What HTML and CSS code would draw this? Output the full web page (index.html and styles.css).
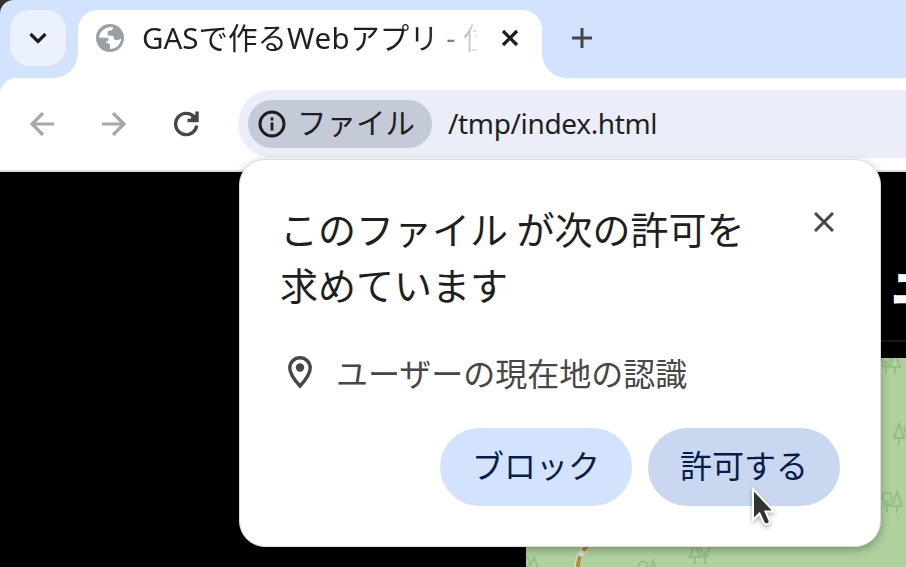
FILE: index.html
```html
<!DOCTYPE html>
<html lang="ja">
<head>
<meta charset="utf-8">
<title>GASで作るWebアプリ</title>
<link rel="stylesheet" href="styles.css">
</head>
<body>
<div class="window">
  <header class="tabstrip">
    <button class="tab-search" aria-label="タブを検索"><svg width="56" height="56" viewBox="0 0 56 56"><path d="M20.500 24l7.500 7.500 7.500-7.500" fill="none" stroke="#1f1f1f" stroke-width="3.200"/></svg></button>
    <div class="tab">
      <svg class="globe" width="28" height="28" viewBox="0 0 28 28"><circle cx="14" cy="14" r="14" fill="#9aa0a6"/><path d="M17 3C9.500 2.500 3.700 7 3 13.500c3 .2 5.500.3 8 .3 1 0 1.700.9 1.500 2-.1.800-1 1.300-2 1.300v1.700c0 1 1.500 1 3.500 1.100v5.200c6 0 11-4.600 11.200-11-1 1.700-3 2-5 2-1.600 0-2.300-1-2.300-2.700-1-2.300-2-1.400-4.500-1.600-1.600-.2-2-1-1.900-2.500.1-2 1-2.700 3-2.700 1.500 0 2.500-1.300 2.500-3.600z" fill="#fff"/></svg>
      <span class="tab-title">GASで作る<span class="latin">Web</span>アプリ - 位置情報</span>
      <svg class="tab-close" width="20" height="20" viewBox="0 0 20 20"><path d="M3 3l14 14M17 3L3 17" stroke="#1f1f1f" stroke-width="3.200"/></svg>
    </div>
    <svg class="new-tab" width="20" height="20" viewBox="0 0 20 20"><path d="M10 0v20M0 10h20" stroke="#474747" stroke-width="3"/></svg>
  </header>
  <nav class="toolbar">
    <svg width="24" height="24" viewBox="0 0 24 24"><path d="M13 1L2 12l11 11M2 12h22" fill="none" stroke="#a8a8a8" stroke-width="3.200"/></svg>
    <svg width="24" height="24" viewBox="0 0 24 24"><path d="M11 1l11 11-11 11M22 12H0" fill="none" stroke="#a8a8a8" stroke-width="3.200"/></svg>
    <svg class="reload" width="26" height="26" viewBox="0 0 26 26"><path d="M23.700 14.500a10.600 10.600 0 1 1-2.500-8.500M24 .5v9H14.500M18 8h4.500V4" fill="none" stroke="#474747" stroke-width="3.400"/></svg>
    <div class="omnibox">
      <div class="chip">
        <svg width="28" height="28" viewBox="0 0 28 28"><circle cx="14" cy="14" r="12" fill="none" stroke="#1f1f1f" stroke-width="3"/><path d="M14 12.500v8M14 7.500v3" stroke="#1f1f1f" stroke-width="2.800"/></svg>
        <span>ファイル</span>
      </div>
      <span class="url">/tmp/index.html</span>
    </div>
  </nav>
  <main class="page">
    <div class="page-head"><h1>ユ</h1></div>
    <svg class="map" width="380" height="209" viewBox="526 358 380 209">
      <defs>
        <g id="fir"><path d="M0 0l-5 14H5zM0 14v7"/></g>
        <g id="oak"><circle cy="5" r="4.500"/><path d="M0 9v12M-4 11l4 4 4-4"/></g>
      </defs>
      <path fill="#aed19e" d="M526 358h380v209H526z"/>
      <path d="M577 570Q577 549 597 540" fill="none" stroke="#d5dfc8" stroke-width="6"/>
      <path d="M578 570Q577 549 597 540" fill="none" stroke="#b58a3c" stroke-width="4" stroke-dasharray="14 6"/>
      <g fill="none" stroke="#97bd88" stroke-width="2">
        <use href="#oak" x="886" y="353"/><use href="#fir" x="895" y="353"/>
        <use href="#fir" x="899" y="424"/><use href="#oak" x="909" y="424"/>
        <use href="#oak" x="887" y="492"/><use href="#fir" x="897" y="492"/>
        <use href="#fir" x="695" y="543"/><use href="#oak" x="705" y="543"/>
        <use href="#oak" x="643" y="561"/><use href="#fir" x="653" y="561"/>
        <use href="#oak" x="525" y="557"/><use href="#fir" x="534" y="557"/>
      </g>
    </svg>
  </main>
</div>
<section class="prompt" role="dialog">
  <div class="prompt-head">
    <h2>このファイル が次の許可を<br>求めています</h2>
    <svg width="20" height="20" viewBox="0 0 20 20"><path d="M1 1l18 18M19 1L1 19" stroke="#474747" stroke-width="3"/></svg>
  </div>
  <div class="permission">
    <svg width="24" height="33" viewBox="0 0 24 33"><path d="M12 30C5 22.500 1.800 17 1.800 12a10.200 10.200 0 0 1 20.400 0c0 5-3.200 10.500-10.200 18z" fill="none" stroke="#474747" stroke-width="3.400"/><circle cx="12" cy="11.500" r="4.200" fill="#474747"/></svg>
    <span>ユーザーの現在地の認識</span>
  </div>
  <div class="actions">
    <button>ブロック</button>
    <button class="hover">許可する</button>
  </div>
</section>
<svg class="cursor" width="28" height="42" viewBox="0 0 28 42"><path d="M2 4v31l6.500-6.500 4.300 9.300q2 2.200 4.200 1.200 2.300-1.200 1.500-3.500L14.500 26.500H23z" fill="#333" stroke="#fff" stroke-width="2"/></svg>
</body>
</html>
```

FILE: styles.css
```css
* { box-sizing: border-box; }
body { margin: 0; overflow: hidden; background: #35322f; color: #1f1f1f; font-family: "Noto Sans", "Noto Sans CJK JP", sans-serif; }
svg { display: block; flex: none; }
button { border: 0; padding: 0; font: inherit; color: inherit; }
.window { width: 906px; height: 567px; display: flex; flex-direction: column; background: #d3e3fd; border-top-left-radius: 14px; overflow: hidden; }
.tabstrip { height: 78px; display: flex; padding: 10px 0 0 10px; flex: none; }
.tab-search { width: 56px; height: 56px; border-radius: 20px; background: #ebf1fe; }
.tab { position: relative; width: 464px; height: 68px; margin-left: 12px; padding: 0 22px 12px 18px; display: flex; align-items: center; background: #fff; border-radius: 20px 20px 0 0; }
.tab::before, .tab::after { content: ""; position: absolute; bottom: 0; width: 24px; height: 24px; }
.tab::before { right: 100%; background: radial-gradient(circle at 0 0, transparent 23.5px, #fff 24px); }
.tab::after { left: 100%; background: radial-gradient(circle at 100% 0, transparent 23.5px, #fff 24px); }
.tab-title { width: 335px; margin-left: 18px; font-size: 29.500px; line-height: 40px; white-space: nowrap; overflow: hidden; -webkit-mask-image: linear-gradient(90deg, #000 285px, transparent 340px); mask-image: linear-gradient(90deg, #000 285px, transparent 340px); }
.latin { letter-spacing: .5px; }
.tab-close { margin-left: auto; }
.new-tab { margin: 18px 0 0 30px; }
.toolbar { height: 94px; flex: none; display: flex; align-items: center; padding: 0 0 0 30px; background: #fff; border-bottom: 2px solid #dedede; border-top-left-radius: 16px; gap: 48px; }
.reload { margin: 0 1px 0 -1px; }
.omnibox { flex: 1; height: 68px; margin-left: -10px; padding-left: 10px; display: flex; align-items: center; background: #ebeef8; border-radius: 34px 0 0 34px; }
.chip { width: 184px; height: 48px; padding-left: 10px; display: flex; align-items: center; gap: 11px; background: #c4cad7; border-radius: 24px; font-size: 29.500px; line-height: 48px; }
.chip span { padding-bottom: 2px; }
.url { margin-left: 16px; padding-bottom: 2px; font-size: 28px; letter-spacing: -.35px; white-space: nowrap; }
.page { flex: 1; background: #000; display: flex; flex-direction: column; align-items: flex-end; }
.page-head { width: 380px; height: 170px; margin-bottom: 16px; border-bottom: 2px solid #151515; overflow: hidden; display: flex; padding: 82px 0 0 366px; }
h1 { margin: 0; font: 900 40px/64px "Noto Sans CJK JP", sans-serif; color: #fff; -webkit-text-stroke: 1.500px #fff; }
.prompt { position: absolute; left: 239px; top: 159px; width: 642px; height: 388px; padding: 41px 40px 40px; border: 1px solid #dcdcdc; border-radius: 26px; background: #fff; box-shadow: 0 3px 8px rgba(0,0,0,.3); }
.prompt-head { display: flex; justify-content: space-between; padding-right: 6px; }
.prompt-head svg { margin-top: 11px; }
h2 { margin: 0; font-size: 38px; line-height: 56px; font-weight: 400; word-spacing: -1.500px; white-space: nowrap; }
.permission { display: flex; align-items: center; gap: 24px; height: 48px; margin: 35px 0 0 8px; color: #474747; font-size: 32px; line-height: 48px; }
.permission span { padding-top: 4px; }
.actions { display: flex; justify-content: flex-end; gap: 16px; margin-top: 32px; }
.actions button { width: 192px; height: 78px; padding-bottom: 7px; border-radius: 39px; background: #d3e3fd; color: #041e49; font-size: 32px; }
.actions .hover { background: #c9d7f0; }
.cursor { position: absolute; left: 751px; top: 485px; filter: drop-shadow(0 2px 2px rgba(0,0,0,.3)); }
```
